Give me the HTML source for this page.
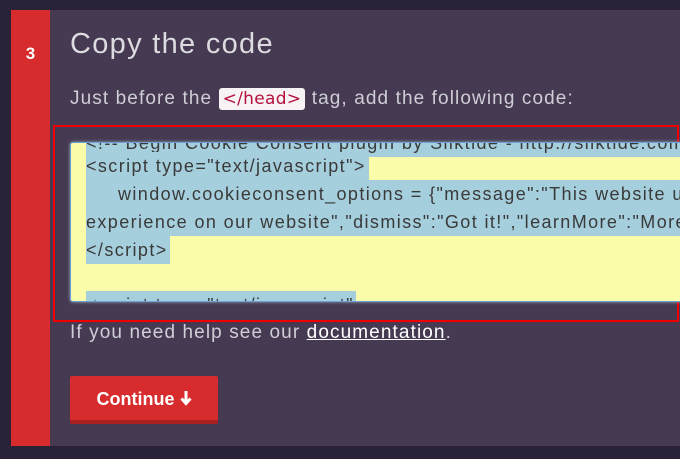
<!DOCTYPE html>
<html><head><meta charset="utf-8"><style>
*{margin:0;padding:0;box-sizing:border-box}
body{width:680px;height:459px;background:#2a2236;position:relative;overflow:hidden;font-family:"Liberation Sans",sans-serif}
.strip{position:absolute;left:11px;top:10px;width:39px;height:436px;background:#d72b2d;color:#fff;font-weight:bold;font-size:17px;text-align:center;padding-top:34px}
.panel{position:absolute;left:50px;top:10px;width:640px;height:436px;background:#453a52}
h1{position:absolute;left:70px;top:28px;font-size:29px;letter-spacing:1.3px;font-weight:normal;color:#dcdce0}
.p1{position:absolute;left:70px;top:88px;font-size:19px;letter-spacing:1.1px;color:#cfcdd6}
code{background:#f7f2f4;color:#b5103c;border-radius:3px;padding:1px 4px;font-family:"DejaVu Sans",sans-serif;font-size:17px;letter-spacing:0.3px}
.outline{position:absolute;left:53px;top:125px;width:626px;height:197px;border:2px solid #e00;}
.ta{position:absolute;left:70px;top:142px;width:620px;height:160px;background:#fbfcaa;border:1px solid #6ea0d8;border-radius:3px;overflow:hidden;box-shadow:0 0 3px #9ab}
.ln{position:absolute;left:15px;height:28px;line-height:28px;font-size:18px;letter-spacing:1.4px;color:#3a3a3a;white-space:nowrap;background:#a6cfdd}
.p2{position:absolute;left:70px;top:322px;font-size:19px;letter-spacing:1.1px;color:#cfcdd6}
.p2 u{color:#fff}
.btn{position:absolute;left:70px;top:376px;width:148px;height:48px;background:#d72b2d;border-bottom:4px solid #a8201f;border-radius:2px;color:#fff;font-weight:bold;font-size:18px;text-align:center;line-height:46px}
</style></head><body>
<div class="strip">3</div>
<div class="panel"></div>
<h1>Copy the code</h1>
<div class="p1">Just before the <code>&lt;/head&gt;</code> tag, add the following code:</div>
<div class="outline"></div>
<div class="ta">
<div class="ln" style="top:-14px;width:620px">&lt;!-- Begin Cookie Consent plugin by Silktide - http://silktide.com/cookieconsent --&gt;</div>
<div class="ln" style="top:9px;padding-right:3px">&lt;script type="text/javascript"&gt;</div>
<div class="ln" style="top:37px;width:620px;padding-left:32px">window.cookieconsent_options = {"message":"This website uses cookies</div>
<div class="ln" style="top:65px;width:620px">experience on our website","dismiss":"Got it!","learnMore":"More info"</div>
<div class="ln" style="top:93px;padding-right:2px">&lt;/script&gt;</div>
<div class="ln" style="top:148px;padding-right:2px">&lt;script type="text/javascript"</div>
</div>
<div class="p2">If you need help see our <u>documentation</u>.</div>
<div class="btn">Continue <svg width="12" height="16" viewBox="0 0 12 16" style="vertical-align:-1px"><path d="M6 1V13M1.5 8.5L6 13.5L10.5 8.5" stroke="#fff" stroke-width="3" fill="none"/></svg></div>
</body></html>
